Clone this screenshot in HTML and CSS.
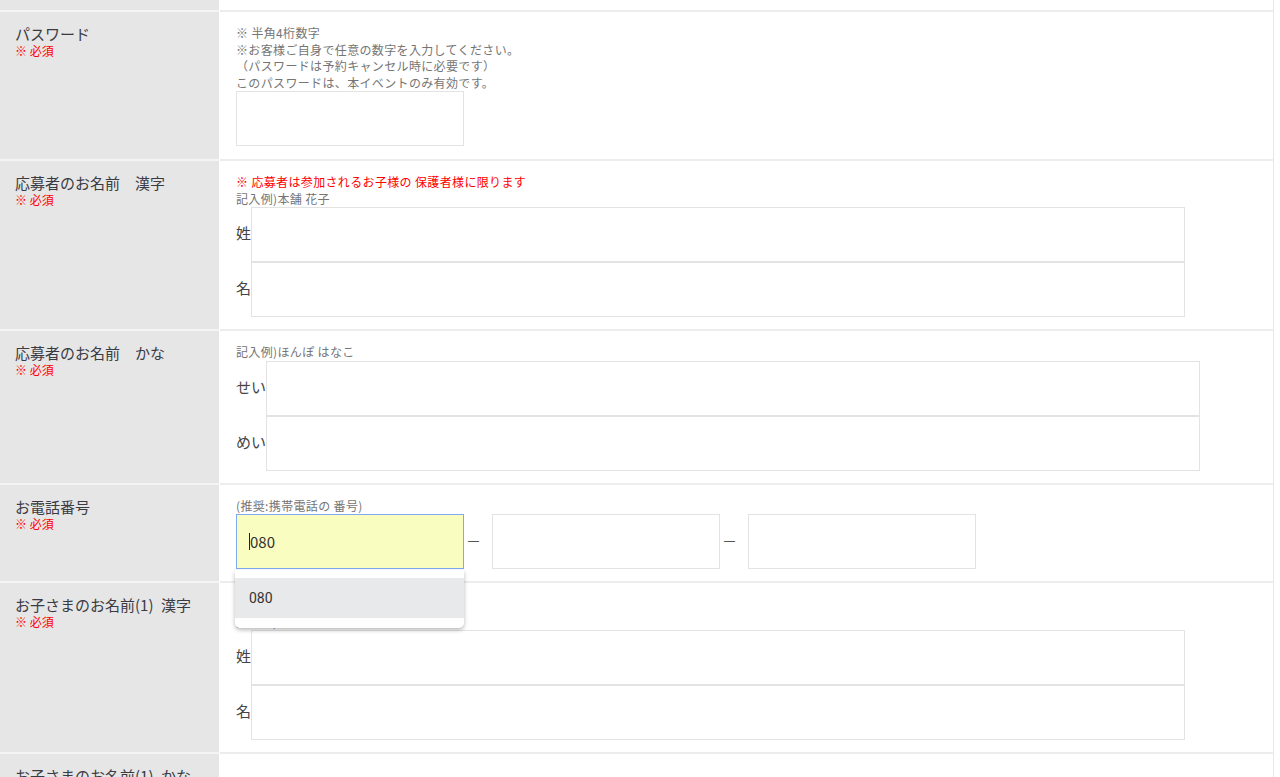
FILE: index.html
```html
<!DOCTYPE html>
<html lang="ja">
<head>
  <meta charset="UTF-8" />
  <meta name="viewport" content="width=device-width, initial-scale=1.0"/>
  <title>申込フォーム</title>
  <link rel="stylesheet" href="styles.css">
</head>
<body>

  <table class="form-table">
    <tr class="top-row">
      <th></th>
      <td></td>
    </tr>

    <tr>
      <th><span class="label">パスワード</span><span class="req">※ 必須</span></th>
      <td class="first">
        <p class="note">※ 半角4桁数字<br>※お客様ご自身で任意の数字を入力してください。<br>（パスワードは予約キャンセル時に必要です）<br>このパスワードは、本イベントのみ有効です。</p>
        <input class="input short" type="password">
      </td>
    </tr>

    <tr>
      <th><span class="label">応募者のお名前　漢字</span><span class="req">※ 必須</span></th>
      <td>
        <p class="note alert">※ 応募者は参加されるお子様の 保護者様に限ります</p>
        <p class="note">記入例)本舗 花子</p>
        <div class="name-row"><span class="name-label">姓</span><input class="input wide" type="text"></div>
        <div class="name-row"><span class="name-label">名</span><input class="input wide" type="text"></div>
      </td>
    </tr>

    <tr>
      <th><span class="label">応募者のお名前　かな</span><span class="req">※ 必須</span></th>
      <td>
        <p class="note">記入例)ほんぽ はなこ</p>
        <div class="name-row"><span class="name-label">せい</span><input class="input wide" type="text"></div>
        <div class="name-row"><span class="name-label">めい</span><input class="input wide" type="text"></div>
      </td>
    </tr>

    <tr>
      <th><span class="label">お電話番号</span><span class="req">※ 必須</span></th>
      <td>
        <p class="note">(推奨:携帯電話の 番号)</p>
        <div class="tel-row">
          <div class="tel-field">
            <input class="input short focused" type="tel" value="080">
            <span class="caret"></span>
            <ul class="suggest">
              <li class="active">080</li>
            </ul>
          </div>
          <span class="dash">－</span>
          <input class="input short" type="tel">
          <span class="dash">－</span>
          <input class="input short" type="tel">
        </div>
      </td>
    </tr>

    <tr>
      <th><span class="label">お子さまのお名前(1)&ensp;漢字</span><span class="req">※ 必須</span></th>
      <td class="child">
        <p class="note alert">※ 小学生のお子様</p>
        <p class="note">記入例)本舗 太郎</p>
        <div class="name-row"><span class="name-label">姓</span><input class="input wide" type="text"></div>
        <div class="name-row"><span class="name-label">名</span><input class="input wide" type="text"></div>
      </td>
    </tr>

    <tr>
      <th><span class="label">お子さまのお名前(1)&ensp;かな</span><span class="req">※ 必須</span></th>
      <td>
        <div class="name-row spaced"><span class="name-label">せい</span><input class="input wide" type="text"></div>
        <div class="name-row"><span class="name-label">めい</span><input class="input wide" type="text"></div>
      </td>
    </tr>
  </table>

</body>
</html>
```

FILE: styles.css
```css
* {
  box-sizing: border-box;
}

body {
  margin: 0;
  background: #fff;
  font-family: "Noto Sans CJK JP", "Noto Sans", sans-serif;
  color: #333;
}

.form-table {
  width: 1274px;
  border-collapse: separate;
  border-spacing: 0;
  table-layout: fixed;
}

.form-table th {
  width: 220px;
  background: #e6e6e6;
  border-right: 1px solid #fff;
  border-bottom: 2px solid #f4f4f4;
  padding: 12px 15px;
  text-align: left;
  vertical-align: top;
  font-weight: normal;
}

.form-table td {
  border-right: 1px solid #e8e8e8;
  border-bottom: 2px solid #ededed;
  padding: 13px 16px 12px;
  vertical-align: top;
}

.form-table td.first {
  padding-bottom: 13px;
}

.form-table td.child {
  padding-top: 14px;
}

.form-table .top-row th,
.form-table .top-row td {
  height: 12px;
  padding: 0;
}

.label {
  display: block;
  font-size: 15px;
  line-height: 19px;
  color: #3b3b44;
}

.req {
  display: block;
  font-size: 12px;
  line-height: 15px;
  color: #f00;
}

.note {
  margin: 0;
  font-size: 12px;
  line-height: 16.5px;
  letter-spacing: 0.35px;
  color: #757575;
}

.note.alert {
  color: #f00;
}

.input {
  display: block;
  height: 55px;
  margin: 0;
  padding: 0 13px;
  border: 1px solid #e3e3e3;
  background: #fff;
  font-family: inherit;
  font-size: 15px;
  color: #333;
  outline: none;
}

.input.short {
  width: 228px;
}

.input.wide {
  width: 934px;
}

.input.focused {
  background: #fafdc0;
  border-color: #7ea9f3;
}

.name-row {
  display: flex;
  align-items: center;
}

.name-row.spaced {
  margin-top: 30px;
}

.name-label {
  padding-bottom: 4px;
  font-size: 15px;
  color: #444;
}

.tel-row {
  display: flex;
  align-items: center;
}

.tel-field {
  position: relative;
}

.caret {
  position: absolute;
  left: 13px;
  top: 19px;
  width: 1px;
  height: 17px;
  background: #222;
}

.dash {
  width: 28px;
  padding-left: 2px;
  padding-bottom: 2px;
  font-size: 15px;
  color: #555;
}

.suggest {
  position: absolute;
  left: -1px;
  top: 56px;
  width: 229px;
  margin: 0;
  padding: 8px 0 10px;
  list-style: none;
  background: #fff;
  border-radius: 0 0 5px 5px;
  box-shadow: 0 2px 4px rgba(0, 0, 0, 0.28);
  z-index: 2;
}

.suggest li {
  height: 40px;
  line-height: 40px;
  padding-left: 14px;
  font-family: Roboto, "Noto Sans", sans-serif;
  font-size: 14px;
  color: #333;
}

.suggest li.active {
  background: #e8e9eb;
}
```
